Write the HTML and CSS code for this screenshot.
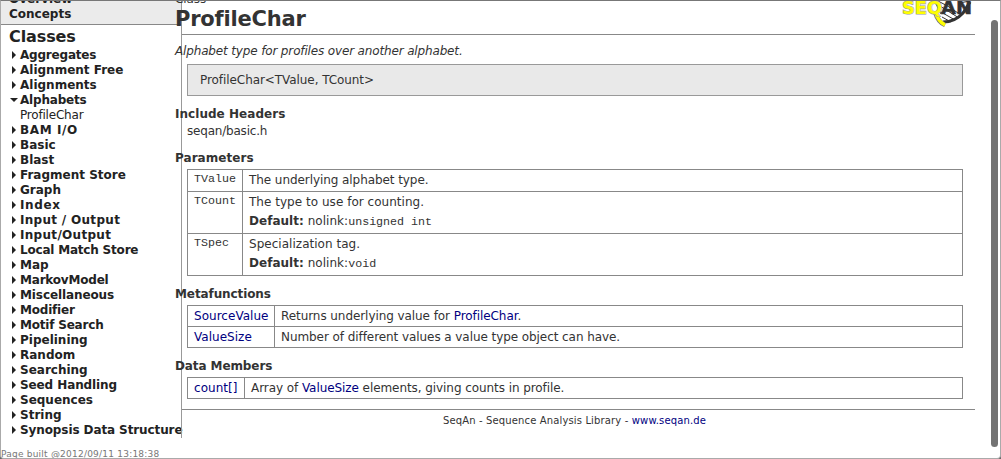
FILE: index.html
```html
<!DOCTYPE html>
<html lang="en">
<head>
<meta charset="utf-8">
<title>ProfileChar</title>
<link rel="stylesheet" href="styles.css">
</head>
<body>
<div class="window">
  <div class="columns">
    <nav class="sidebar">
      <div class="tabs">
        <div class="tab tab-cut">Overview</div>
        <div class="tab">Concepts</div>
      </div>
      <h2 class="side-title">Classes</h2>
      <ul class="tree">
        <li><i class="arrow"></i><b class="tight">Aggregates</b></li>
        <li><i class="arrow"></i><b>Alignment Free</b></li>
        <li><i class="arrow"></i><b>Alignments</b></li>
        <li><i class="arrow open"></i><b class="tight">Alphabets</b></li>
        <li class="leaf"><span class="tight">ProfileChar</span></li>
        <li><i class="arrow"></i><b class="wider">BAM I/O</b></li>
        <li><i class="arrow"></i><b>Basic</b></li>
        <li><i class="arrow"></i><b>Blast</b></li>
        <li><i class="arrow"></i><b>Fragment Store</b></li>
        <li><i class="arrow"></i><b>Graph</b></li>
        <li><i class="arrow"></i><b class="wider">Index</b></li>
        <li><i class="arrow"></i><b class="wide">Input / Output</b></li>
        <li><i class="arrow"></i><b class="wide">Input/Output</b></li>
        <li><i class="arrow"></i><b class="tight">Local Match Store</b></li>
        <li><i class="arrow"></i><b>Map</b></li>
        <li><i class="arrow"></i><b class="tight">MarkovModel</b></li>
        <li><i class="arrow"></i><b class="snug">Miscellaneous</b></li>
        <li><i class="arrow"></i><b class="tight">Modifier</b></li>
        <li><i class="arrow"></i><b class="tight">Motif Search</b></li>
        <li><i class="arrow"></i><b>Pipelining</b></li>
        <li><i class="arrow"></i><b>Random</b></li>
        <li><i class="arrow"></i><b>Searching</b></li>
        <li><i class="arrow"></i><b class="snug">Seed Handling</b></li>
        <li><i class="arrow"></i><b>Sequences</b></li>
        <li><i class="arrow"></i><b>String</b></li>
        <li><i class="arrow"></i><b class="snug">Synopsis Data Structure</b></li>
      </ul>
    </nav>
    <main class="main">
      <header class="head">
        <div>
          <div class="kind">Class</div>
          <h1 class="title">ProfileChar</h1>
        </div>
        <svg class="logo" width="72" height="28" viewBox="0 0 72 28">
          <g fill="none" stroke="#333" stroke-width="1">
            <path d="M34 2L40 14M37 1Q46 5 57 13M39 6L58 18M40 12L54 20M41 17L50 22M58 3L69 1"/>
            <path d="M42 22Q54 22 62 13L69 2" stroke-width="3"/>
          </g>
          <path d="M34 12Q37 22 44 25" fill="none" stroke="#777" stroke-width="4.5"/>
          <path d="M34 11Q37 21.500 44 25" fill="none" stroke="#ff0" stroke-width="3.4"/>
          <text class="logo-seq" x="1" y="14" textLength="40" lengthAdjust="spacingAndGlyphs">SEQ</text>
          <text class="logo-an" x="40" y="14" textLength="31" lengthAdjust="spacingAndGlyphs">AN</text>
        </svg>
      </header>
      <p class="summary">Alphabet type for profiles over another alphabet.</p>
      <div class="signature">ProfileChar&lt;TValue, TCount&gt;</div>

      <h3 class="section s-include">Include Headers</h3>
      <p class="include">seqan/basic.h</p>

      <h3 class="section s-params">Parameters</h3>
      <div class="table params">
        <div class="row"><code>TValue</code><div class="cell"><p>The underlying alphabet type.</p></div></div>
        <div class="row tall"><code>TCount</code><div class="cell"><p>The type to use for counting.</p><p class="default"><strong>Default:</strong> nolink:<code>unsigned int</code></p></div></div>
        <div class="row tall"><code>TSpec</code><div class="cell"><p>Specialization tag.</p><p class="default"><strong>Default:</strong> nolink:<code>void</code></p></div></div>
      </div>

      <h3 class="section s-meta">Metafunctions</h3>
      <div class="table meta">
        <div class="row"><a>SourceValue</a><div class="cell"><p>Returns underlying value for <a>ProfileChar</a>.</p></div></div>
        <div class="row"><a>ValueSize</a><div class="cell"><p>Number of different values a value type object can have.</p></div></div>
      </div>

      <h3 class="section s-members">Data Members</h3>
      <div class="table members">
        <div class="row"><a>count[]</a><div class="cell"><p>Array of <a>ValueSize</a> elements, giving counts in profile.</p></div></div>
      </div>
      <footer class="foot">SeqAn - Sequence Analysis Library - <a>www.seqan.de</a></footer>
    </main>
    <div class="scroll"><div class="thumb"></div></div>
  </div>
  <div class="built">Page built @2012/09/11 13:18:38</div>
</div>
</body>
</html>
```
FILE: styles.css
```css
* { box-sizing: border-box; margin: 0; padding: 0; }
body { background: #666; font: 12px/15px "DejaVu Sans", Verdana, sans-serif; color: #333; overflow: hidden; }
.window { width: 1001px; height: 459px; background: #fff; border: 1px solid #aaa; border-top-color: #777; border-radius: 0 0 4px 4px; overflow: hidden; }
.columns { display: flex; height: 437px; }
.sidebar { width: 180px; flex: none; color: #222; white-space: nowrap; }
.tabs { height: 24px; background: #ebebeb; border-bottom: 1px solid #888; padding-left: 8px; overflow: hidden; font-weight: bold; }
.tab { height: 15px; }
.tab-cut { margin-top: -9px; }
.side-title { font-size: 16px; line-height: 20px; padding: 2px 0 0 8px; height: 23px; letter-spacing: -.1px; }
.tree { list-style: none; }
.tree li { display: flex; height: 15px; padding-left: 11px; }
.tree .leaf { padding-left: 19px; }
.tree .wide { letter-spacing: .3px; }
.tree .wider { letter-spacing: .6px; }
.tree .tight { letter-spacing: -.2px; }
.tree .snug { letter-spacing: -.1px; }
.arrow { width: 8px; flex: none; padding-top: 3px; }
.arrow::before { content: ""; display: block; width: 0; height: 0; border-left: 4px solid #222; border-top: 4px solid transparent; border-bottom: 4px solid transparent; }
.arrow.open { padding-top: 5px; }
.arrow.open::before { margin-left: -2px; border-top: 4px solid #222; border-left: 4px solid transparent; border-right: 4px solid transparent; border-bottom: 0; }
.main { width: 794px; flex: none; border-left: 1px solid #999; white-space: nowrap; letter-spacing: -.07px; }
.head { height: 34px; border-bottom: 1px solid #888; display: flex; justify-content: space-between; }
.kind { height: 5px; line-height: 15px; margin: -9px 0 9px -7px; }
.title { font-size: 21px; line-height: 26px; margin-left: -7px; letter-spacing: -.2px; }
.logo { margin: -1px 2px 0 0; }
.logo text { font-weight: bold; font-size: 18px; letter-spacing: 0; paint-order: stroke; }
.logo-seq { fill: #ff0; stroke: #999; stroke-width: 1.2px; }
.logo-an { fill: #333; stroke: #333; stroke-width: .5px; }
.summary { font-style: italic; margin: 9px 0 0 -7px; height: 20px; letter-spacing: -.15px; }
.signature { width: 776px; height: 32px; margin-left: 5px; border: 1px solid #999; background: #e9e9e9; padding: 8px 12px; }
.section { font-size: 12px; line-height: 15px; height: 15px; padding-top: 1px; margin-left: -7px; letter-spacing: .04px; }
.s-include { margin-top: 10px; }
.include { margin: 3px 0 0 5px; letter-spacing: -.2px; }
.s-params { margin-top: 11px; }
.s-meta { margin-top: 10px; letter-spacing: -.1px; }
.s-members { margin-top: 10px; letter-spacing: -.1px; }
.table { width: 776px; margin: 4px 0 0 5px; border: 1px solid #888; border-top: 0; }
.row { display: grid; height: 21px; border-top: 1px solid #888; }
.row > * { padding-left: 6px; padding-top: 3px; }
.row > a { letter-spacing: .03px; }
.cell { border-left: 1px solid #888; }
.params .row { grid-template-columns: 54px 1fr; height: 22px; }
.params .tall { height: 42px; }
.tall p { letter-spacing: .03px; }
.default { margin-top: 4px; }
code { font: 11.67px/15px "Liberation Mono", "Courier New", monospace; letter-spacing: 0; }
.row > code { padding-top: 2px; }
.meta .row { grid-template-columns: 86px 1fr; }
.members .row { grid-template-columns: 56px 1fr; }
a { color: #00007f; }
.foot { margin-top: 10px; border-top: 1px solid #888; padding: 3px 8px 0 0; text-align: center; font-size: 10px; letter-spacing: .14px; }
.scroll { padding: 19px 0 0 16px; }
.thumb { width: 7px; height: 427px; border-radius: 4px; background: #737373; }
.built { font-size: 9px; line-height: 12px; margin-top: 10px; color: #777; letter-spacing: .22px; }
```
